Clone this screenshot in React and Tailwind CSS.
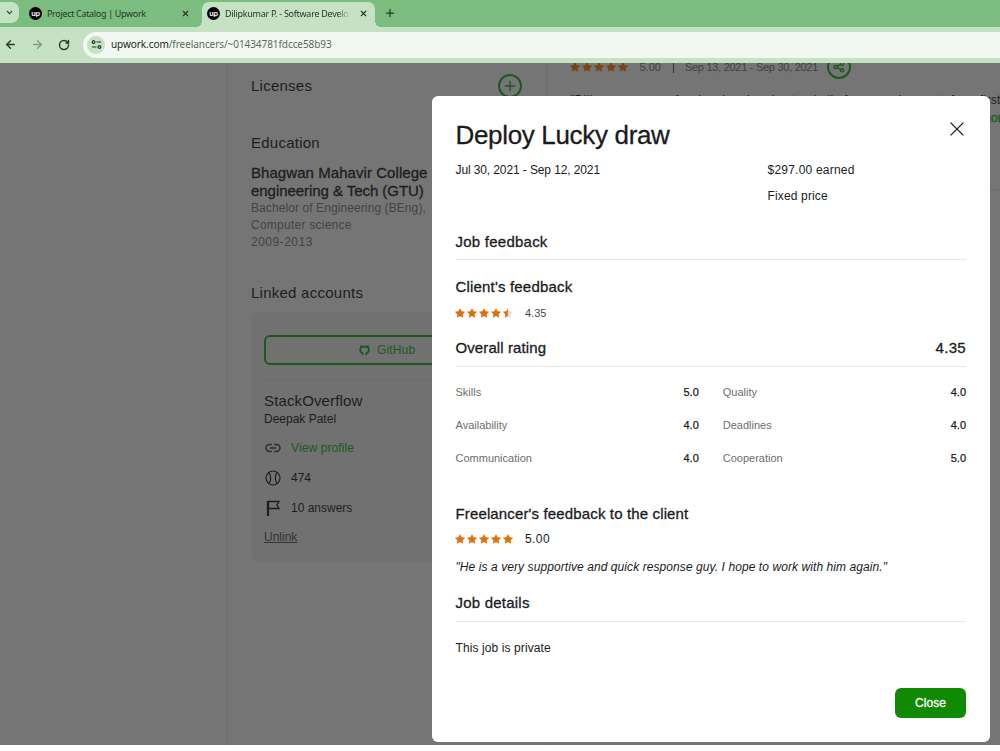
import React from "react";
import { ArrowLeft, ArrowRight, ChevronDown, Plus, RotateCw, X } from "lucide-react";

const ratings = [
  { label: "Skills", value: "5.0" },
  { label: "Quality", value: "4.0" },
  { label: "Availability", value: "4.0" },
  { label: "Deadlines", value: "4.0" },
  { label: "Communication", value: "4.0" },
  { label: "Cooperation", value: "5.0" },
];

const STAR = "M6 .9l1.6 3.3 3.6.5-2.6 2.5.6 3.6L6 9.1l-3.2 1.7.6-3.6L.8 4.7l3.6-.5z";

const Stars = ({ value, color = "#e06f0a", empty = "#dddddd" }) => (
  <div className="flex -ml-[1.5px]">
    {[0, 1, 2, 3, 4].map((i) => {
      const fill = Math.max(0, Math.min(1, value - i));
      return (
        <svg key={i} className="w-3 h-3 shrink-0" viewBox="0 0 12 12">
          <path d={STAR} fill={fill < 1 ? empty : color} />
          {fill > 0 && fill < 1 && (
            <path d={STAR} fill={color} style={{ clipPath: `inset(0 ${(1 - fill) * 80}% 0 0)` }} />
          )}
        </svg>
      );
    })}
  </div>
);

const UpLogo = () => (
  <span className="flex items-center justify-center w-[13px] h-[13px] shrink-0 rounded-full bg-black text-white font-['Lato'] font-bold text-[8px] leading-[8px] tracking-[-0.3px] pb-0.5">
    up
  </span>
);

const BrowserBar = () => (
  <header className="h-[63px] bg-[#c6e2c5] font-['Noto_Sans',sans-serif] text-[#283528]">
    {/* Tabs */}
    <div className="flex h-[27px] bg-[#7bbd7e] text-[9px]">
      <div className="flex items-center justify-center w-[19px] h-[21px] mt-0.5 rounded-r-lg bg-[#c6e2c5]">
        <ChevronDown size={9} strokeWidth={3} />
      </div>
      <div className="flex items-center w-[173px] pl-[10px] pr-0.5">
        <UpLogo />
        <span className="ml-[5px] flex-1 whitespace-nowrap tracking-[-0.33px]">Project Catalog | Upwork</span>
        <X size={9} strokeWidth={3} />
      </div>
      <div className="relative flex items-center w-[173px] mt-0.5 ml-[10px] pl-[5px] pr-[7px] pb-0.5 rounded-t-[7px] bg-[#c6e2c5]">
        <UpLogo />
        <span className="ml-[5px] w-[125px] overflow-hidden whitespace-nowrap tracking-[-0.27px] [mask-image:linear-gradient(to_right,black_90%,transparent)]">
          Dilipkumar P. - Software Develo
        </span>
        <X className="ml-auto shrink-0" size={9} strokeWidth={3} />
        <span className="absolute -left-1.5 bottom-0 w-1.5 h-1.5 bg-[radial-gradient(circle_at_0_0,#7bbd7e_6px,#c6e2c5_6px)]" />
        <span className="absolute -right-1.5 bottom-0 w-1.5 h-1.5 bg-[radial-gradient(circle_at_100%_0,#7bbd7e_6px,#c6e2c5_6px)]" />
      </div>
      <Plus className="mt-[7px] ml-[9px]" size={12} strokeWidth={2.5} />
    </div>
    {/* Address bar */}
    <div className="flex items-center h-[35px] pl-1">
      <ArrowLeft size={13} strokeWidth={2.5} />
      <ArrowRight className="ml-[14px] text-[#7f9a7e]" size={13} strokeWidth={2.5} />
      <RotateCw className="ml-[14px]" size={12} strokeWidth={2.8} />
      <div className="flex items-center flex-1 h-[26px] ml-[13px] pl-1 rounded-l-full bg-[#f1f8f1]">
        <span className="flex items-center justify-center w-[18px] h-[18px] rounded-full bg-[#c6e2c5]">
          <svg className="w-[11px] h-[11px]" viewBox="0 0 12 12" fill="none" stroke="currentColor" strokeWidth="1.3">
            <circle cx="2.8" cy="3.3" r="1.5" />
            <path d="M6 3.3h5M1 8.7h5" />
            <circle cx="9.2" cy="8.7" r="1.5" />
          </svg>
        </span>
        <span className="ml-[6px] text-[10px] tracking-[-0.07px] text-[#5d685d]">
          <span className="text-[#202820]">upwork.com</span>/freelancers/~01434781fdcce58b93
        </span>
      </div>
    </div>
  </header>
);

const Profile = () => (
  <main className="flex h-full">
    <aside className="w-[320px] ml-[227px] shrink-0 pl-[23px] border-x border-[#6d6d6d] text-[#1d1d1d]">
      <div className="flex items-center justify-between h-[25px] mt-[11px] pr-6">
        <h3 className="text-[15px] tracking-[0.25px]">Licenses</h3>
        <span className="flex items-center justify-center w-6 h-6 -mt-0.5 rounded-full border-2 border-[#1c5a1c] text-[#1c5a1c]">
          <Plus size={16} strokeWidth={2} />
        </span>
      </div>
      <h3 className="mt-[33px] text-[15px] leading-[22px] tracking-[0.25px]">Education</h3>
      <h4 className="mt-[10px] text-[15px] leading-[18px] whitespace-nowrap tracking-[0.06px] [-webkit-text-stroke:0.3px]">
        Bhagwan Mahavir College
        <br />
        <span className="tracking-[-0.05px]">engineering &amp; Tech (GTU)</span>
      </h4>
      <p className="text-[12px] leading-[17px] text-[#434343]">
        <span className="tracking-[0.09px]">Bachelor of Engineering (BEng),</span>
        <br />
        <span className="tracking-[0.25px]">Computer science</span>
        <br />
        <span className="tracking-[0.5px]">2009-2013</span>
      </p>
      <h3 className="mt-[31px] text-[15px] leading-[22px] tracking-[0.25px]">Linked accounts</h3>

      <div className="h-[250px] mt-[8px] pl-[13px] pt-[23px] rounded-lg bg-[#717171]">
        <div className="flex items-center h-[30px] w-[260px] pl-[93px] gap-[7px] rounded-md border-2 border-[#1c5a1c] text-[12px] text-[#1c5a1c]">
          <svg className="w-[11px] h-[11px]" viewBox="0 0 20 20" fill="none" stroke="currentColor" strokeWidth="3.4">
            <path d="M6.500 18v-3.200C3.500 13.800 2.200 11.500 2.200 8.800c0-1.600.5-2.900 1.400-3.900V2.500L6.500 3.200h7l2.900-.7v2.400c.9 1 1.400 2.300 1.400 3.900 0 2.700-1.300 5-4.300 6V18" />
          </svg>
          <span className="tracking-[0.15px]">GitHub</span>
        </div>
        <div className="mt-[14px] border-t border-[#6b6b6b]" />
        <h4 className="mt-[11px] text-[15px] leading-[20px] tracking-[0.13px]">StackOverflow</h4>
        <p className="text-[12px] leading-[17px]">Deepak Patel</p>
        <div className="flex items-center gap-[9px] h-[30px] mt-[5px] text-[12px] text-[#1c5a1c]">
          <svg className="w-[18px] h-[18px] text-[#2b2b2b]" viewBox="0 0 18 18" fill="none" stroke="currentColor" strokeWidth="1.4">
            <path d="M7.800 5.500H5.500a3.500 3.500 0 0 0 0 7h2.300M10.200 5.500h2.300a3.500 3.500 0 0 1 0 7h-2.300M6 9h6" />
          </svg>
          <span className="tracking-[0.1px]">View profile</span>
        </div>
        <div className="flex items-center gap-[9px] h-[30px] text-[12px]">
          <svg className="w-[18px] h-[18px]" viewBox="0 0 18 18" fill="none" stroke="currentColor" strokeWidth="1.2">
            <circle cx="9" cy="9" r="7" />
            <path d="M5 3.500c2.200 3 2.200 8 0 11M13 3.500c-2.200 3-2.200 8 0 11" />
          </svg>
          <span>474</span>
        </div>
        <div className="flex items-center gap-[9px] h-[30px] text-[12px]">
          <svg className="w-[18px] h-[18px]" viewBox="0 0 18 18" fill="none" stroke="currentColor" strokeWidth="1.3">
            <path d="M4 2v15" strokeWidth="2.2" />
            <path d="M4 2.500h11l-2 3.500 2 3.500H4" />
          </svg>
          <span>10 answers</span>
        </div>
        <span className="block mt-[5px] text-[12px] leading-[18px] underline text-[#333333]">Unlink</span>
      </div>
    </aside>

    <section className="flex-1 pl-[23px] text-[#424242] overflow-hidden">
      <div className="flex items-center h-6 -mt-2 text-[11px] whitespace-nowrap">
        <Stars value={5} color="#7c4211" />
        <span className="ml-[11px]">5.00</span>
        <span className="ml-[12px] w-px h-3 bg-[#333333]" />
        <span className="ml-[11px] tracking-[-0.28px]">Sep 13, 2021 - Sep 30, 2021</span>
        <span className="flex items-center justify-center w-6 h-6 ml-[9px] rounded-full border-2 border-[#1c5a1c] text-[#1c5a1c]">
          <svg className="w-3 h-3" viewBox="0 0 12 12" fill="none" stroke="currentColor" strokeWidth="1.4">
            <circle cx="2.500" cy="6" r="1.600" />
            <circle cx="9" cy="2.700" r="1.600" />
            <circle cx="9" cy="9.300" r="1.600" />
            <path d="M4 5.300l3.500-1.900M4 6.700l3.500 1.900" />
          </svg>
        </span>
      </div>
      <p className="w-[430px] mt-[12px] text-[12px] leading-[18px] tracking-[0.32px] text-right whitespace-nowrap text-[#1d1d1d]">
        "Dilip was very professional and understood all of our requirements from first
      </p>
      <p className="pl-[411px] text-[12px] leading-[18px] text-[#1c5a1c] [-webkit-text-stroke:0.3px]">more</p>
      <div className="mt-[62px] border-t border-[#6d6d6d]" />
    </section>
  </main>
);

const JobModal = () => (
  <div className="absolute left-[431.5px] top-[96px] w-[558.5px] h-[646px] px-6 rounded-md bg-white text-[#1b1b1b]">
    <div className="flex justify-between h-[61px] pt-[22px]">
      <h1 className="text-[26px] leading-[34px] tracking-[-0.33px] [-webkit-text-stroke:0.3px]">Deploy Lucky draw</h1>
      <svg className="w-[14px] h-[14px] mt-[4px] mr-0.5" viewBox="0 0 14 14" stroke="currentColor" strokeWidth="1.3">
        <path d="M.6.6l12.800 12.800M13.400.6L.6 13.400" />
      </svg>
    </div>
    <div className="flex text-[12px] leading-[26px]">
      <p className="w-[312px] tracking-[-0.11px]">Jul 30, 2021 - Sep 12, 2021</p>
      <div>
        <p className="tracking-[0.22px]">$297.00 earned</p>
        <p className="tracking-[0.15px]">Fixed price</p>
      </div>
    </div>
    <h2 className="h-[28px] mt-[23px] text-[15px] leading-[20px] tracking-[0.24px] border-b border-[#e6e6e6] [-webkit-text-stroke:0.3px]">Job feedback</h2>

    <h2 className="mt-[17px] text-[15px] leading-[20px] tracking-[0.18px] [-webkit-text-stroke:0.3px]">Client's feedback</h2>
    <div className="flex items-center h-[18px] mt-[7px] text-[11px]">
      <Stars value={4.35} />
      <span className="ml-[11px] text-[#4a4a4a]">4.35</span>
    </div>

    <div className="flex justify-between h-[29px] mt-[16px] text-[15px] leading-[20px] border-b border-[#e6e6e6] [-webkit-text-stroke:0.3px]">
      <h2 className="tracking-[0.1px]">Overall rating</h2>
      <span className="tracking-[0.3px]">4.35</span>
    </div>
    <div className="grid grid-cols-2 gap-x-6 mt-[9px] text-[11px] leading-[33px]">
      {ratings.map(({ label, value }) => (
        <div key={label} className="flex justify-between">
          <span className="text-[#6d6d6d]">{label}</span>
          <span className="[-webkit-text-stroke:0.25px]">{value}</span>
        </div>
      ))}
    </div>

    <h2 className="mt-[29px] text-[15px] leading-[20px] tracking-[0.14px] [-webkit-text-stroke:0.3px]">Freelancer's feedback to the client</h2>
    <div className="flex items-center h-[18px] mt-[6px] text-[12px]">
      <Stars value={5} />
      <span className="ml-[11px] tracking-[0.4px]">5.00</span>
    </div>
    <p className="mt-[10px] text-[12px] leading-[18px] tracking-[0.08px] italic whitespace-nowrap">
      "He is a very supportive and quick response guy. I hope to work with him again."
    </p>
    <h2 className="h-[29px] mt-[17px] text-[15px] leading-[20px] tracking-[0.22px] border-b border-[#e6e6e6] [-webkit-text-stroke:0.3px]">Job details</h2>
    <p className="mt-[17px] text-[12px] leading-[18px] tracking-[0.1px]">This job is private</p>
    <div className="flex justify-end mt-[31px]">
      <button className="w-[71px] h-[30px] rounded-md bg-[#108a00] text-[12px] tracking-[0.1px] text-white [-webkit-text-stroke:0.3px]">Close</button>
    </div>
  </div>
);

const App = () => {
  return (
    <div className="relative w-[1000px] h-[751px] overflow-hidden bg-white font-['Liberation_Sans',sans-serif]">
      <BrowserBar />
      <div className="h-[682px] overflow-hidden bg-[#757575]">
        <Profile />
      </div>
      <JobModal />
    </div>
  );
};

export default App;
